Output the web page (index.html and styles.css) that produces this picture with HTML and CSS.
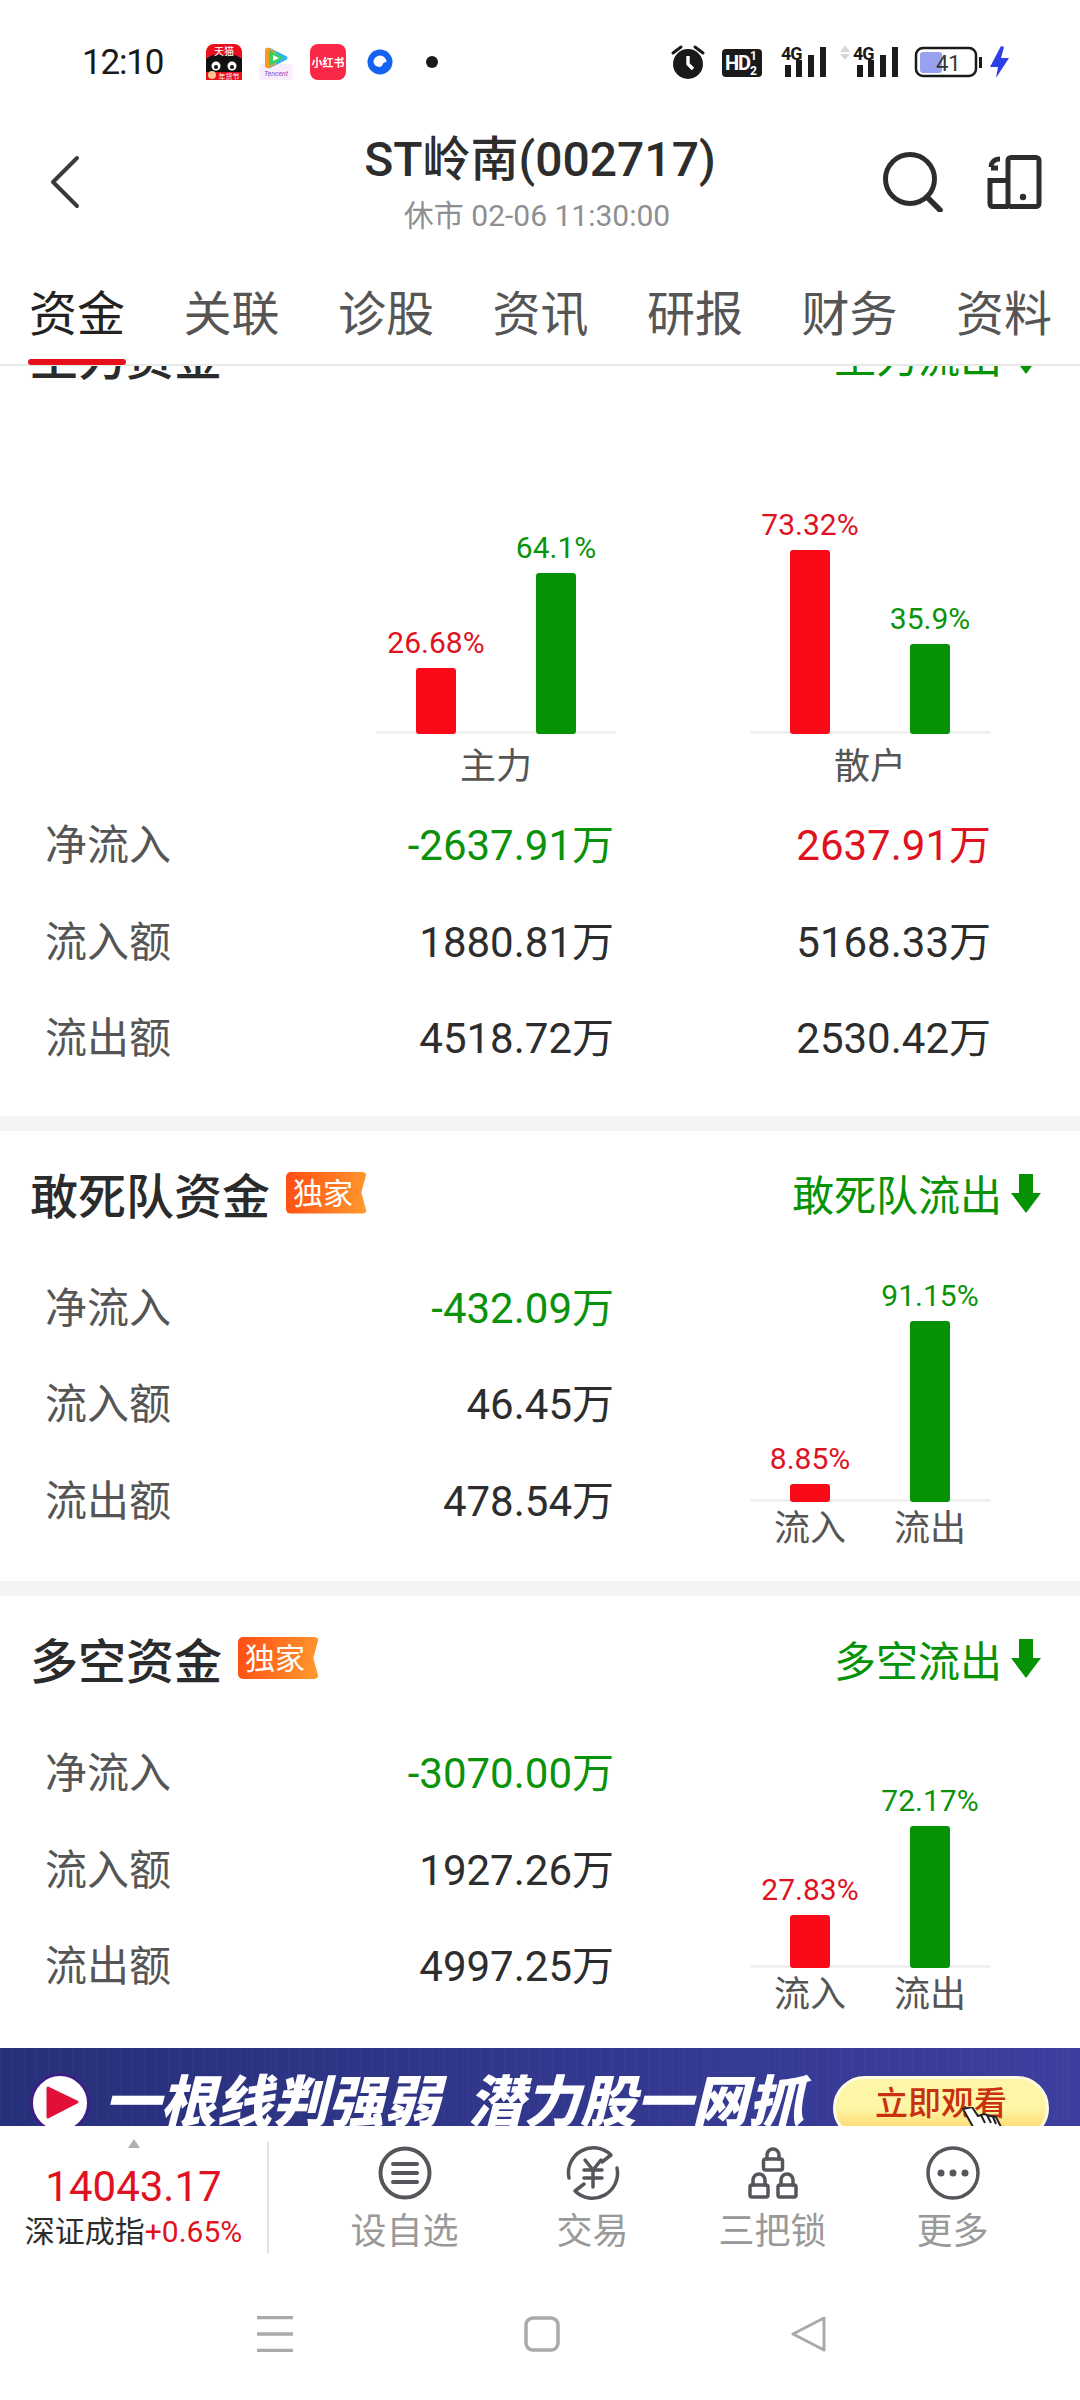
FILE: index.html
```html
<!DOCTYPE html>
<html lang="zh-CN">
<head>
<meta charset="utf-8">
<title>ST岭南(002717)</title>
<link rel="stylesheet" href="styles.css">
</head>
<body>
<div class="page">
  <div class="status">
    <div class="status-left">
      <span class="clock">12:10</span>
      <div class="apps">
        <svg class="app" viewBox="0 0 36 36">
          <rect width="36" height="36" rx="8" fill="#e8101a"/>
          <path d="M0 15 C8 9 10 11 18 11 C26 11 28 9 36 15 V31 H0Z" fill="#111"/>
          <rect y="28" width="36" height="8" fill="#e8101a"/>
          <circle cx="10" cy="22" r="4.500" fill="#fff"/><circle cx="26" cy="22" r="4.500" fill="#fff"/>
          <circle cx="10" cy="23" r="2" fill="#111"/><circle cx="26" cy="23" r="2" fill="#111"/>
          <circle cx="6" cy="31" r="4" fill="#f8c98a"/>
          <text x="18" y="11" class="app-t1">天猫</text>
          <text x="23" y="34.500" class="app-t2">年货节</text>
        </svg>
        <svg class="app" viewBox="0 0 36 36">
          <rect x="1" y="20" width="34" height="16" rx="3" fill="#f8eefb"/>
          <path d="M8 7 Q8 3 12 4 L28 12 Q31 14 28 16 L12 24 Q8 25 8 21Z" fill="#2bb6f0"/>
          <path d="M7 7 Q7 3 11 4 L18 8 L18 20 L11 24 Q7 25 7 21Z" fill="#f59a23"/>
          <path d="M11 8 Q11 6 13 7 L24 13 Q25 14 24 15 L13 21 Q11 22 11 20Z" fill="#3ccf5a"/>
          <path d="M15 11 L21 14 L15 17Z" fill="#fff"/>
          <text x="18" y="32" class="app-t3">Tencent</text>
        </svg>
        <svg class="app" viewBox="0 0 36 36">
          <rect width="36" height="36" rx="8" fill="#fb2848"/>
          <text x="18" y="23" class="app-t4">小红书</text>
        </svg>
        <svg class="app" viewBox="0 0 36 36">
          <circle cx="18" cy="18" r="12.500" fill="#1463f3"/>
          <path d="M11.500 18 a6.500 6.500 0 0 1 13 0 q-3.500 0 -4 3 q-1 2 -3 2 a6.500 6.500 0 0 1 -6 -5z" fill="#fff"/>
        </svg>
        <svg class="app" viewBox="0 0 36 36"><circle cx="18" cy="18" r="6" fill="#1a1a1a"/></svg>
      </div>
    </div>
    <svg class="status-right" viewBox="670 42 340 40">
      <g fill="#1a1a1a">
        <circle cx="688" cy="64" r="15"/>
        <path d="M673 53 L681 47 M703 53 L695 47" stroke="#1a1a1a" stroke-width="3" stroke-linecap="round"/>
        <path d="M688 56 V64 L693 69" fill="none" stroke="#fff" stroke-width="3.400"/>
        <rect x="722" y="49" width="40" height="28" rx="4"/>
        <text x="725" y="70" class="st-hd">HD</text>
        <text x="750" y="60" class="st-sm">1</text>
        <text x="750" y="75" class="st-sm">2</text>
        <text x="781" y="60" class="st-4g">4G</text>
        <rect x="785" y="65" width="6" height="12"/><rect x="796" y="60" width="6" height="17"/>
        <rect x="808" y="55" width="6" height="22"/><rect x="820" y="47" width="6" height="30"/>
        <path d="M840 52 L845 45 L850 52Z M840 54 L845 60 L850 54Z" fill="#d8d8d8"/>
        <text x="853" y="60" class="st-4g">4G</text>
        <rect x="857" y="65" width="6" height="12"/><rect x="868" y="60" width="6" height="17"/>
        <rect x="880" y="55" width="6" height="22"/><rect x="892" y="47" width="6" height="30"/>
      </g>
      <rect x="916" y="48" width="60" height="28" rx="7" fill="none" stroke="#1a1a1a" stroke-width="2.500"/>
      <rect x="920" y="52" width="22" height="21" rx="3" fill="#98a0f0"/>
      <rect x="979" y="57" width="3" height="11" fill="#1a1a1a"/>
      <text x="936" y="71" class="st-batt">41</text>
      <path d="M1001 46 L990 67 H998 L996 78 L1009 58 H1001 L1004 47Z" fill="#2d3fe6"/>
    </svg>
  </div>

  <header class="header">
    <div class="header-left">
      <svg class="back" viewBox="0 0 32 56"><path d="M27 4 L3 28 L27 52" fill="none" stroke="#3a3a3a" stroke-width="4" stroke-linecap="round" stroke-linejoin="round"/></svg>
    </div>
    <div class="header-mid">
      <div class="title">ST岭南(002717)</div>
      <div class="subtitle">休市 02-06 11:30:00</div>
    </div>
    <div class="header-right">
      <svg class="search" viewBox="0 0 60 60"><circle cx="27" cy="27" r="24.500" fill="none" stroke="#2d2d2d" stroke-width="5"/><path d="M44 45 L57 58" stroke="#2d2d2d" stroke-width="5.500" stroke-linecap="round"/></svg>
      <svg class="device" viewBox="0 0 56 56">
        <g fill="none" stroke="#2d2d2d" stroke-width="5">
          <rect x="22" y="3.500" width="31" height="49" rx="3"/>
          <path d="M22 26.500 H4 V49 Q4 52.500 7 52.500 H22"/>
          <path d="M14 5 C8 5 5 9 5 13 M5 14 H12"/>
        </g>
        <circle cx="37" cy="43" r="3.200" fill="#2d2d2d"/>
      </svg>
    </div>
  </header>

  <nav class="tabs">
    <span class="tab tab-on">资金</span>
    <span class="tab">关联</span>
    <span class="tab">诊股</span>
    <span class="tab">资讯</span>
    <span class="tab">研报</span>
    <span class="tab">财务</span>
    <span class="tab">资料</span>
  </nav>

  <main class="scroll">
    <div class="scroll-inner">
      <section class="section section-main">
        <div class="head">
          <div class="head-l"><h2 class="h-title">主力资金</h2></div>
          <div class="head-r"><span>主力流出</span><svg class="down" viewBox="0 0 30 40"><path d="M8 1 H22 V20 H30 L15 40 L0 20 H8Z" fill="#059305"/></svg></div>
        </div>
        <div class="dual">
          <div class="group">
            <div class="bars">
              <div class="col"><span class="pct red">26.68%</span><i class="bar bar-r" style="height:66px"></i></div>
              <div class="col"><span class="pct green">64.1%</span><i class="bar bar-g" style="height:161px"></i></div>
            </div>
            <div class="group-label">主力</div>
          </div>
          <div class="group">
            <div class="bars">
              <div class="col"><span class="pct red">73.32%</span><i class="bar bar-r" style="height:184px"></i></div>
              <div class="col"><span class="pct green">35.9%</span><i class="bar bar-g" style="height:90px"></i></div>
            </div>
            <div class="group-label">散户</div>
          </div>
        </div>
        <div class="row wide"><span class="k">净流入</span><span class="v green">-2637.91万</span><span class="v red">2637.91万</span></div>
        <div class="row wide"><span class="k">流入额</span><span class="v">1880.81万</span><span class="v">5168.33万</span></div>
        <div class="row wide"><span class="k">流出额</span><span class="v">4518.72万</span><span class="v">2530.42万</span></div>
      </section>

      <section class="section">
        <div class="head">
          <div class="head-l"><h2 class="h-title">敢死队资金</h2><span class="badge">独家</span></div>
          <div class="head-r"><span>敢死队流出</span><svg class="down" viewBox="0 0 30 40"><path d="M8 1 H22 V20 H30 L15 40 L0 20 H8Z" fill="#059305"/></svg></div>
        </div>
        <div class="split">
          <div class="table">
            <div class="row"><span class="k">净流入</span><span class="v green">-432.09万</span></div>
            <div class="row"><span class="k">流入额</span><span class="v">46.45万</span></div>
            <div class="row"><span class="k">流出额</span><span class="v">478.54万</span></div>
          </div>
          <div class="mini">
            <div class="bars">
              <div class="col"><span class="pct red">8.85%</span><i class="bar bar-r" style="height:18px"></i></div>
              <div class="col"><span class="pct green">91.15%</span><i class="bar bar-g" style="height:181px"></i></div>
            </div>
            <div class="mini-labels"><span>流入</span><span>流出</span></div>
          </div>
        </div>
      </section>

      <section class="section">
        <div class="head">
          <div class="head-l"><h2 class="h-title">多空资金</h2><span class="badge">独家</span></div>
          <div class="head-r"><span>多空流出</span><svg class="down" viewBox="0 0 30 40"><path d="M8 1 H22 V20 H30 L15 40 L0 20 H8Z" fill="#059305"/></svg></div>
        </div>
        <div class="split">
          <div class="table">
            <div class="row"><span class="k">净流入</span><span class="v green">-3070.00万</span></div>
            <div class="row"><span class="k">流入额</span><span class="v">1927.26万</span></div>
            <div class="row"><span class="k">流出额</span><span class="v">4997.25万</span></div>
          </div>
          <div class="mini">
            <div class="bars">
              <div class="col"><span class="pct red">27.83%</span><i class="bar bar-r" style="height:53px"></i></div>
              <div class="col"><span class="pct green">72.17%</span><i class="bar bar-g" style="height:142px"></i></div>
            </div>
            <div class="mini-labels"><span>流入</span><span>流出</span></div>
          </div>
        </div>
      </section>
    </div>
  </main>

  <aside class="banner">
    <svg class="b-play" viewBox="0 0 60 60"><circle cx="30" cy="30" r="28.500" fill="#fff" stroke="#3d1f86" stroke-width="3"/><path d="M18 15 L47 29 L18 44Z" fill="#e0103a" stroke="#e0103a" stroke-width="3" stroke-linejoin="round"/></svg>
    <span class="b-text">一根线判强弱</span>
    <span class="b-text b-text2">潜力股一网抓</span>
    <div class="b-btn">立即观看
      <svg class="b-hand" viewBox="0 0 44 28"><path d="M3 2 L12 0 L18 9 L24 7 L30 9 L36 10 L43 24 L43 30 H18 L12 18Z" fill="#fff" stroke="#222" stroke-width="2"/><path d="M21 8 L25 16 M27 8 L31 16 M33 10 L36 17" stroke="#222" stroke-width="2"/></svg>
    </div>
  </aside>

  <div class="bottom">
    <div class="index">
      <i class="caret"></i>
      <div class="index-val">14043.17</div>
      <div class="index-sub">深证成指<span class="red">+0.65%</span></div>
    </div>
    <div class="vline"></div>
    <div class="actions">
      <div class="act act-first">
        <svg class="act-ic" viewBox="0 0 56 56"><circle cx="28" cy="28" r="24.500" class="ln"/><path d="M16 19 H40 M16 28 H40 M16 37 H40" class="ln"/></svg>
        <span>设自选</span>
      </div>
      <div class="act">
        <svg class="act-ic" viewBox="0 0 56 56"><path d="M4 33 A25 25 0 0 1 46 10 L37 17 M52 23 A25 25 0 0 1 10 46 L19 39" class="ln ln3"/><path d="M20 15 L28 25 L36 15 M19 25 H37 M19 33 H37 M28 25 V42" class="ln ln3"/></svg>
        <span>交易</span>
      </div>
      <div class="act">
        <svg class="act-ic" viewBox="0 0 56 56"><g class="ln ln3"><rect x="18.500" y="14" width="19" height="11" rx="2"/><path d="M22 14 V10 a6 6 0 0 1 12 0 V14"/><rect x="5" y="40" width="18" height="12" rx="2"/><path d="M8 40 V35 a6 6 0 0 1 12 0 V40"/><rect x="33" y="40" width="18" height="12" rx="2"/><path d="M36 40 V35 a6 6 0 0 1 12 0 V40"/></g></svg>
        <span>三把锁</span>
      </div>
      <div class="act">
        <svg class="act-ic" viewBox="0 0 56 56"><circle cx="28" cy="28" r="25" class="ln ln3"/><circle cx="16" cy="28" r="3.500" class="dot"/><circle cx="28" cy="28" r="3.500" class="dot"/><circle cx="40" cy="28" r="3.500" class="dot"/></svg>
        <span>更多</span>
      </div>
    </div>
  </div>

  <div class="sysnav">
    <svg class="sys" viewBox="0 0 36 36"><path d="M0 1.500 H36 M0 18 H36 M0 34.500 H36" stroke="#aaa" stroke-width="3.500"/></svg>
    <svg class="sys" viewBox="0 0 36 36"><rect x="2" y="2" width="32" height="32" rx="7" fill="none" stroke="#aaa" stroke-width="3.500"/></svg>
    <svg class="sys" viewBox="0 0 36 36"><path d="M33 2 L2 18 L33 34Z" fill="none" stroke="#aaa" stroke-width="3" stroke-linejoin="round"/></svg>
  </div>
</div>
</body>
</html>
```

FILE: styles.css
```css
* { box-sizing: border-box; }
html, body { margin: 0; padding: 0; background: #fff; }
body { font-family: Roboto, "Noto Sans CJK SC", sans-serif; color: #2d2d2d; }
.page { width: 1080px; height: 2400px; display: flex; flex-direction: column; overflow: hidden; background: #fff; }

/* status bar */
.status { height: 110px; flex: none; padding: 14px 70px 0 82px; display: flex; justify-content: space-between; align-items: center; }
.status-left { display: flex; align-items: center; }
.clock { font-size: 35px; width: 124px; color: #1a1a1a; letter-spacing: -1.2px; }
.apps { display: flex; gap: 16px; }
.app { width: 36px; height: 36px; display: block; }
.app-t1 { font-size: 10px; fill: #fff; text-anchor: middle; }
.app-t2 { font-size: 7px; fill: #fff; text-anchor: middle; }
.app-t3 { font-size: 7px; fill: #8a3fc4; text-anchor: middle; font-style: italic; }
.app-t4 { font-size: 11px; fill: #fff; text-anchor: middle; font-weight: 700; }
.status-right { width: 340px; height: 40px; display: block; }
.st-hd { font-size: 20px; font-weight: 700; fill: #fff; letter-spacing: -1px; }
.st-sm { font-size: 12px; font-weight: 700; fill: #fff; }
.st-4g { font-size: 18px; font-weight: 700; fill: #1a1a1a; letter-spacing: -1px; }
.st-batt { font-size: 22px; fill: #333; }

/* header */
.header { height: 152px; flex: none; display: grid; grid-template-columns: 1fr auto 1fr; }
.header-left { padding: 44px 0 0 50px; }
.back { width: 32px; height: 56px; display: block; }
.header-mid { padding-top: 20px; text-align: center; }
.title { font-size: 48px; line-height: 60px; font-weight: 500; color: #2d2d2d; }
.subtitle { font-size: 30px; line-height: 44px; color: #8e8e93; margin-top: 4px; padding-right: 6px; }
.header-right { display: flex; justify-content: flex-end; align-items: center; align-self: start; height: 60px; margin-top: 42px; padding-right: 38px; gap: 43px; }
.search { width: 60px; height: 60px; display: block; }
.device { width: 56px; height: 56px; display: block; }

/* tabs */
.tabs { height: 104px; flex: none; display: flex; gap: 58.5px; padding: 0 0 6px 29px; border-bottom: 2px solid #e8e8e8; position: relative; z-index: 1; }
.tab { font-size: 48px; color: #555; position: relative; display: flex; align-items: center; }
.tab-on { color: #222; }
.tab-on::after { content: ""; position: absolute; left: -1px; right: -1px; bottom: -7px; height: 6px; border-radius: 3px; background: #e60f1a; }

/* scrolled content */
.scroll { height: 1682px; flex: none; overflow: hidden; }
.scroll-inner { margin-top: -74px; display: flex; flex-direction: column; gap: 15px; background: #f4f4f4; }
.section { background: #fff; padding-bottom: 33px; }
.section-main { padding-bottom: 30px; }
.head { height: 128px; display: flex; justify-content: space-between; align-items: center; padding: 0 39px 4px 30px; }
.head-l { display: flex; align-items: center; }
.h-title { margin: 0; font-size: 48px; font-weight: 500; color: #2b2b2b; }
.badge { margin-left: 16px; width: 81px; height: 42px; border-radius: 5px; background: linear-gradient(100deg, #ff4c12, #ff9b30); color: #fff; font-size: 30px; line-height: 44px; padding-left: 7px; clip-path: polygon(0 0, 100% 0, 93% 50%, 100% 100%, 0 100%); }
.head-r { display: flex; align-items: center; gap: 9px; font-size: 42px; color: #059305; }
.down { width: 30px; height: 40px; display: block; }

.green { color: #0a930a; }
.red { color: #e0121f; }

.dual { height: 376px; padding-left: 376px; display: flex; gap: 134px; }
.group { width: 240px; display: flex; flex-direction: column; }
.group-label { height: 62px; line-height: 66px; text-align: center; font-size: 36px; color: #555; }
.bars { flex: 1; display: flex; background: linear-gradient(#f0f0f0, #f0f0f0) bottom / 100% 3px no-repeat; }
.col { width: 120px; display: flex; flex-direction: column; align-items: center; justify-content: flex-end; }
.pct { font-size: 30px; line-height: 40px; margin-bottom: 5px; }
.bar { display: block; width: 40px; border-radius: 3px; }
.bar-r { background: #fa0a18; }
.bar-g { background: #059305; }

.row { height: 96.5px; display: flex; align-items: center; padding-bottom: 5px; }
.wide { padding-left: 45px; padding-right: 89px; }
.wide .k { width: 192px; }
.wide .v { width: 377px; }
.k { font-size: 42px; color: #555; }
.v { font-size: 42px; text-align: right; }

.split { display: flex; }
.table { width: 614px; padding-left: 45px; flex: none; }
.table .k { flex: 1; }
.mini { width: 240px; margin-left: 136px; display: flex; flex-direction: column; }
.mini-labels { height: 46px; display: flex; }
.mini-labels span { width: 120px; text-align: center; font-size: 36px; line-height: 54px; color: #555; }

/* banner */
.banner { height: 78px; flex: none; position: relative; overflow: hidden; display: flex; align-items: flex-start; padding: 25px 0 0 30px; background: repeating-linear-gradient(90deg, rgba(255,255,255,.025) 0 1px, transparent 1px 12px), linear-gradient(90deg, #27307a, #3c3f9e); }
.b-play { width: 60px; height: 60px; flex: none; }
.b-text { margin-left: 14px; font-size: 56px; line-height: 62px; font-weight: 900; font-style: italic; color: #fff; flex: none; margin-top: -1px; white-space: nowrap; }
.b-text2 { margin-left: 28px; }
.b-btn { margin-left: 29px; margin-top: 3px; width: 216px; height: 64px; flex: none; position: relative; border: 3px solid #fffbe0; border-radius: 32px; background: linear-gradient(#fdf6a6 50%, #ffcf5c); color: #c8300f; font-size: 33px; font-weight: 500; line-height: 50px; text-align: center; }
.b-hand { position: absolute; left: 124px; top: 28px; width: 44px; height: 28px; }

/* bottom bar */
.bottom { height: 142px; flex: none; display: flex; background: #fff; }
.index { width: 267px; padding-top: 13px; text-align: center; }
.caret { display: block; width: 0; height: 0; margin: 0 auto 14px; border: 6px solid transparent; border-top: 0; border-bottom: 9px solid #b0b0b0; }
.index-val { font-size: 42px; line-height: 50px; color: #e0121f; }
.index-sub { font-size: 30px; line-height: 40px; color: #2d2d2d; white-space: nowrap; }
.vline { width: 2px; height: 111px; margin-top: 16px; background: #e2e2e2; }
.actions { flex: 1; display: flex; padding: 19px 0 0 45.5px; }
.act { width: 180px; display: flex; flex-direction: column; align-items: center; font-size: 36px; line-height: 44px; color: #999; }
.act span { margin-top: 3px; }
.act-first { margin-right: 8px; }
.act-ic { width: 56px; height: 56px; display: block; margin-bottom: 6px; }
.ln { fill: none; stroke: #55555c; stroke-width: 4; stroke-linecap: round; stroke-linejoin: round; }
.ln3 { stroke-width: 3.5; }
.dot { fill: #55555c; }

/* system nav */
.sysnav { height: 132px; flex: none; display: flex; align-items: center; gap: 231px; padding: 0 0 0 257px; }
.sys { width: 36px; height: 36px; display: block; }
```
